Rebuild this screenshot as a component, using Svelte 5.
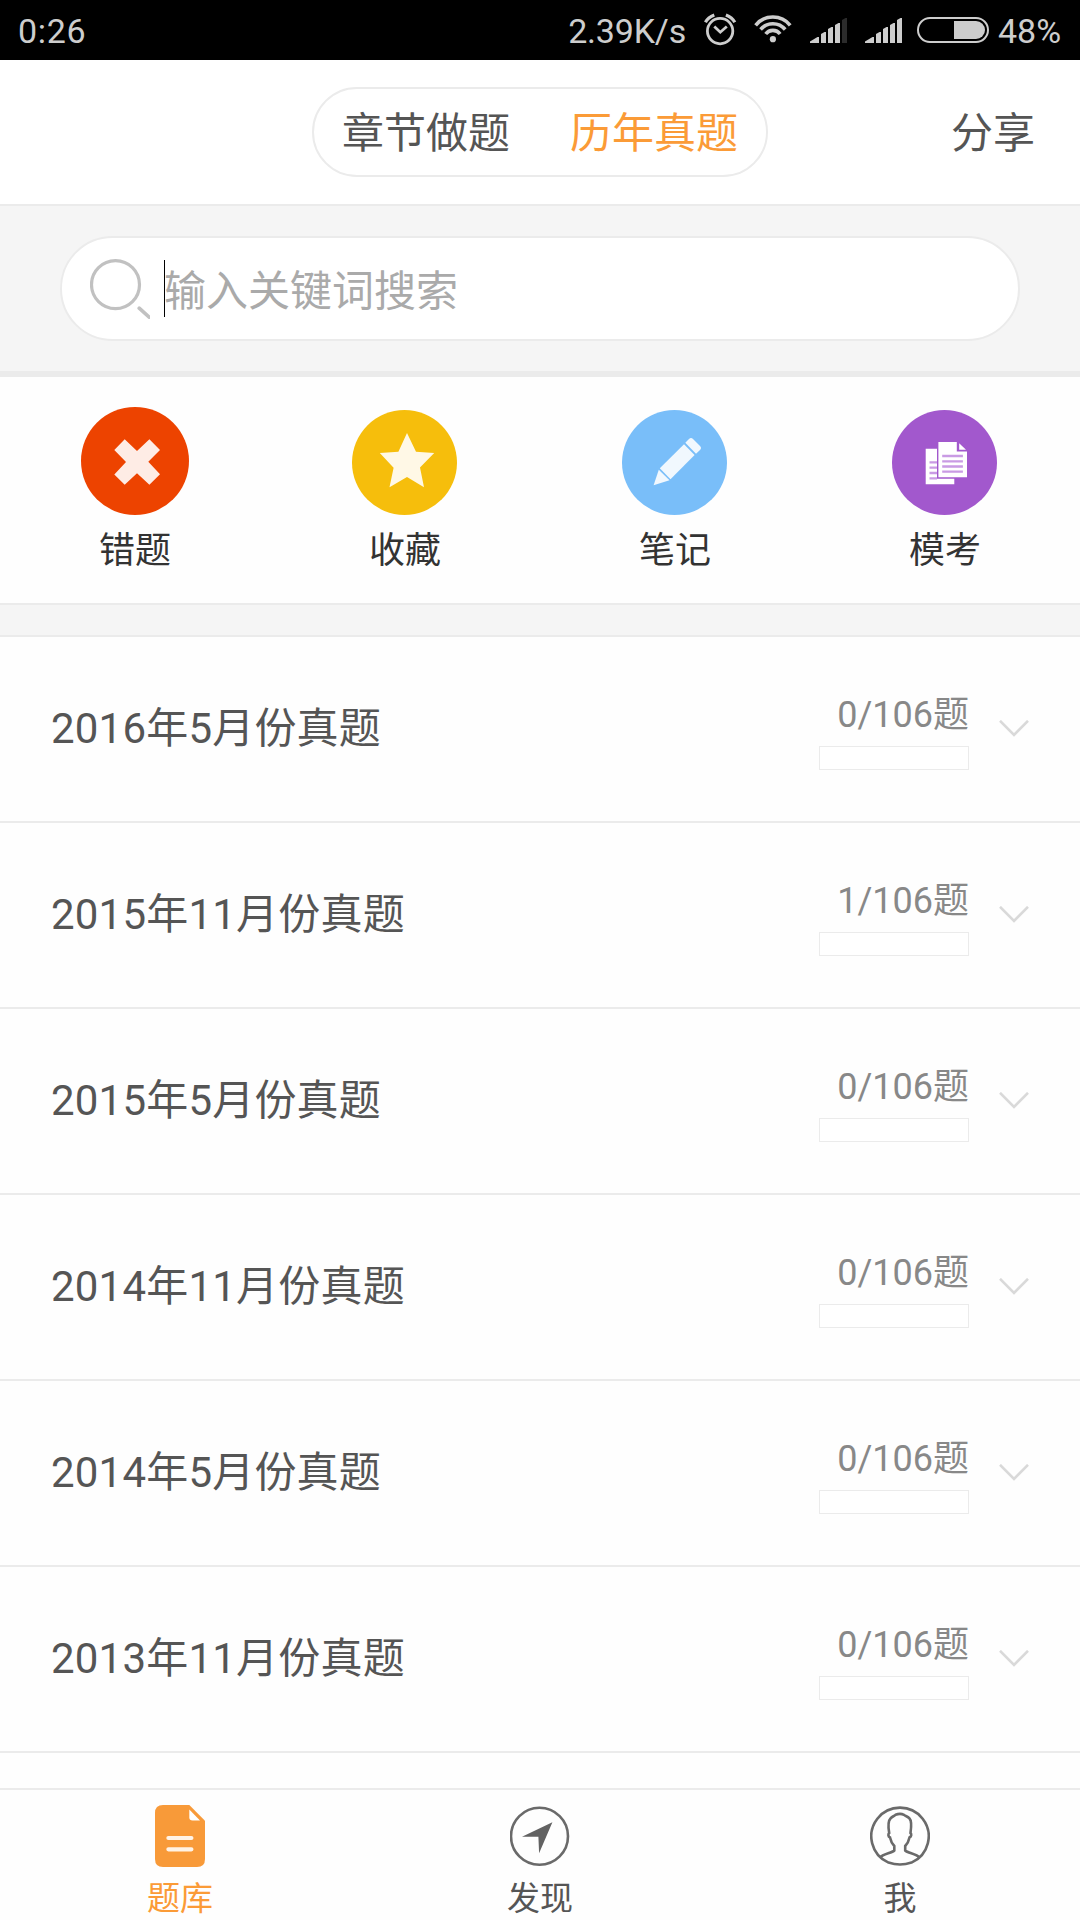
<script lang="ts">
  interface Paper {
    id: number
    title: string
    done: number
    total: number
  }

  const papers: Paper[] = [
    { id: 1, title: "2016年5月份真题", done: 0, total: 106 },
    { id: 2, title: "2015年11月份真题", done: 1, total: 106 },
    { id: 3, title: "2015年5月份真题", done: 0, total: 106 },
    { id: 4, title: "2014年11月份真题", done: 0, total: 106 },
    { id: 5, title: "2014年5月份真题", done: 0, total: 106 },
    { id: 6, title: "2013年11月份真题", done: 0, total: 106 },
  ]

  const modes = ["章节做题", "历年真题"]
  const shortcuts = [
    { icon: "wrong", label: "错题" },
    { icon: "star", label: "收藏" },
    { icon: "note", label: "笔记" },
    { icon: "mock", label: "模考" },
  ]
  const tabs = [
    { icon: "bank", label: "题库" },
    { icon: "find", label: "发现" },
    { icon: "me", label: "我" },
  ]

  let mode = $state("历年真题")
  let tab = $state("bank")
</script>

{#snippet signal(full: boolean)}
  <svg class="signal" width="37" height="25" viewBox="0 0 37 25" fill="#cdcdcd">
    <path d="M0 25v-1.500L7.500 19H9v6z" />
    <path d="M11 25V16L14.500 14H16V25z" />
    <path d="M18 25V11L21.500 9H23V25z" />
    <path d="M25 25V7L28.500 5H30V25z" />
    <path d="M32 25V2L35.500 0H37V25z" fill={full ? "#cdcdcd" : "#2b2b2b"} />
  </svg>
{/snippet}

<div class="screen" lang="zh-CN">
  <div class="status">
    <span class="clock">0:26</span>
    <span class="speed">2.39K/s</span>
    <svg class="alarm" width="33" height="33" viewBox="0 0 33 33" fill="none" stroke="#cdcdcd">
      <circle cx="16.1" cy="18.1" r="12.7" stroke-width="2.8" />
      <path d="M10.3 13.5l6 5.700 6.500-5.700" stroke-width="2.8" />
      <path d="M1.400 9.300Q4 4.500 10.300 2M30.800 9.300Q28.200 4.500 21.900 2" stroke-width="3.200" />
    </svg>
    <svg class="wifi" width="38" height="28" viewBox="0 0 38 28" fill="none" stroke="#cdcdcd" stroke-width="3.6">
      <path d="M1.6 10.3A22.3 22.3 0 0 1 36.2 10.3" />
      <path d="M6.6 14.500A15.9 15.9 0 0 1 31.2 14.500" />
      <path d="M11.7 19A9 9 0 0 1 26.1 19" />
      <circle cx="18.9" cy="24.2" r="3.1" fill="#cdcdcd" stroke="none" />
    </svg>
    {@render signal(false)}
    {@render signal(true)}
    <svg class="battery" width="72" height="26" viewBox="0 0 72 26">
      <rect x="1" y="1" width="70" height="24" rx="12" fill="none" stroke="#cdcdcd" stroke-width="2" />
      <path d="M37 4h22a9 9 0 0 1 0 18H37z" fill="#cdcdcd" />
    </svg>
    <span class="percent">48%</span>
  </div>

  <header class="topbar">
    <div class="switch">
      {#each modes as name}
        <button type="button" class:active={mode === name} onclick={() => (mode = name)}>{name}</button>
      {/each}
    </div>
    <button type="button" class="share">分享</button>
  </header>

  <div class="search">
    <div class="search-box">
      <svg width="60" height="60" viewBox="0 0 60 60" fill="none" stroke="#c1c1c1">
        <circle cx="25.5" cy="25.7" r="24" stroke-width="3.2" />
        <path d="M49.2 49.2l10 9" stroke-width="3.6" stroke-linecap="round" />
      </svg>
      <span class="caret"></span>
      <span class="placeholder">输入关键词搜索</span>
    </div>
  </div>

  <nav class="shortcuts">
    {#each shortcuts as item (item.icon)}
      <a class="shortcut" href="#{item.icon}">
        {#if item.icon === "wrong"}
          <svg width="108" height="108" viewBox="0 0 108 108">
            <circle cx="54" cy="54" r="54" fill="#ed4300" />
            <path d="M43.7 32.3L56 44l12.4-11.7L79 43 67.3 54.7 79 67.3 68.4 77.7 56 66.3 43.7 77.7 33.3 67.5 45 55 33.3 43z" fill="#feece5" />
          </svg>
        {:else if item.icon === "star"}
          <svg width="106" height="105" viewBox="0 0 106 105">
            <circle cx="52.5" cy="52.5" r="52.5" fill="#f6be0c" />
            <path d="M55 23l9 18.7 18.2 1.3L68 57.5l4 19.8L55 67 37.5 77.3l4.1-19.5L27.8 43l18.6-1.3z" fill="#fff8e6" />
          </svg>
        {:else if item.icon === "note"}
          <svg width="106" height="105" viewBox="0 0 106 105">
            <circle cx="52.5" cy="52.5" r="52.5" fill="#79bef9" />
            <g fill="#f1f8fe">
              <path d="M31.6 75.3l5.2-15.6 10.7 10.6z" />
              <path d="M37.8 58.2L62 34.3l10.6 10.8-24.1 24.2z" />
              <path d="M63.3 32.8l3.7-3.7q2-2 4 0l7 7q2 2 0 4L74 43.8z" />
            </g>
          </svg>
        {:else}
          <svg width="106" height="105" viewBox="0 0 106 105">
            <circle cx="52.5" cy="52.5" r="52.5" fill="#a258cd" />
            <path d="M33.7 38.7H45v30.1h17.3v5.5H33.7z" fill="#fff" />
            <path d="M46.4 32h18.4v9.6H75v25.7H46.4z" fill="#fff" />
            <path d="M67.2 33.3l6.8 6.5h-6.8z" fill="#fff" />
            <path d="M50.2 46h20.7M50.2 51.3h20.7M50.2 56.5h20.7M50.2 61.7h20.7M37.5 52.3H45M37.5 57.7H45M37.5 63H45M37.5 68.3H45" stroke="#c99be4" stroke-width="2.3" />
          </svg>
        {/if}
        <span>{item.label}</span>
      </a>
    {/each}
  </nav>

  <ul class="papers">
    {#each papers as paper (paper.id)}
      <li class="paper">
        <span class="title">{paper.title}</span>
        <div class="progress">
          <span class="count">{paper.done}/{paper.total}题</span>
          <span class="bar"></span>
        </div>
        <svg class="chevron" width="30" height="18" viewBox="0 0 30 18" fill="none" stroke="#d9d9d9" stroke-width="2.6">
          <path d="M1 .8l14 14.200 14-14.200" />
        </svg>
      </li>
    {/each}
  </ul>

  <nav class="tabbar">
    {#each tabs as item (item.icon)}
      <button type="button" class="tab" class:active={tab === item.icon} onclick={() => (tab = item.icon)}>
        {#if item.icon === "bank"}
          <svg width="50" height="62" viewBox="0 0 50 62">
            <path d="M8 0h26.3L50 15.7V54q0 8-8 8H8q-8 0-8-8V8q0-8 8-8z" fill="#f89a39" />
            <path d="M34.3 4.5v7.7q0 3.3 3.3 3.3H45z" fill="#fff" />
            <path d="M13.4 33h23M13.4 44.3h23" stroke="#fff3e6" stroke-width="4.2" stroke-linecap="round" />
          </svg>
        {:else if item.icon === "find"}
          <svg width="60" height="62" viewBox="0 -1 60 62">
            <circle cx="29.5" cy="30.2" r="28.5" fill="none" stroke="#6a6a6a" stroke-width="2.6" />
            <path d="M42.4 16.3L12 30.7h16.4l.7 16.6z" fill="#626262" />
          </svg>
        {:else}
          <svg width="60" height="62" viewBox="0 -1 60 62" fill="none" stroke="#6a6a6a" stroke-width="2.6">
            <path d="M18.500 56.600A28.700 28.700 0 1 1 41.500 56.600Q30 60.500 18.500 56.600z" />
            <path d="M10 51.5C13 48 22 47 24.3 44.5V40C21.5 37 20.5 34 20 31.5C18 30.5 18 28 19.2 27C18 20 18 15 20.5 12.5C22 10.5 24 10.3 25.5 8.8C28 7.8 32 7.8 34 8.8C35.5 10.3 38 10.5 39.500 12.5C42 15 41.500 20 40.500 27C41.700 28 41.500 30.5 39.500 31.5C39 34 38 37 35.2 40V44.5C37.500 47 46.500 48 49.500 51.5" />
          </svg>
        {/if}
        <span>{item.label}</span>
      </button>
    {/each}
  </nav>
</div>

<style>
  :global(body) {
    margin: 0;
    background: #fff;
  }

  .screen {
    display: flex;
    flex-direction: column;
    width: 1080px;
    height: 1920px;
    overflow: hidden;
    background: #fefefe;
    color: #555;
    font-family: Roboto, "Noto Sans CJK SC", sans-serif;
    font-size: 42px;
  }

  svg {
    display: block;
    flex-shrink: 0;
  }

  button {
    padding: 0;
    border: 0;
    background: none;
    color: inherit;
    font: inherit;
  }

  .status {
    display: flex;
    align-items: flex-start;
    flex-shrink: 0;
    box-sizing: border-box;
    height: 60px;
    padding: 0 17px 0 18px;
    background: #000;
    color: #cdcdcd;
    font-size: 34px;
    line-height: 62px;
  }

  .clock {
    letter-spacing: 0.7px;
  }

  .speed {
    margin-left: auto;
    letter-spacing: -0.2px;
  }

  .alarm {
    margin: 13px 0 0 18px;
  }

  .wifi {
    margin: 15px 0 0 17px;
  }

  .signal {
    margin: 18px 0 0 18px;
  }

  .battery {
    margin: 17px 0 0 15px;
  }

  .percent {
    width: 65px;
    margin-left: 9px;
  }

  .topbar {
    display: grid;
    grid-template-columns: 1fr auto 1fr;
    align-items: center;
    flex-shrink: 0;
    height: 144px;
    border-bottom: 2px solid #ebebeb;
    background: #fff;
  }

  .topbar button {
    padding-bottom: 5px;
  }

  .switch {
    grid-column: 2;
    display: flex;
    justify-content: space-between;
    box-sizing: border-box;
    width: 456px;
    height: 90px;
    padding: 0 28px;
    border: 2px solid #ebebeb;
    border-radius: 45px;
  }

  .switch .active {
    color: #fb9b37;
  }

  .share {
    justify-self: end;
    margin-right: 45px;
  }

  .search {
    flex-shrink: 0;
    padding: 30px 60px;
    border-bottom: 6px solid #ebebeb;
    background: #f5f5f5;
  }

  .search-box {
    display: flex;
    align-items: center;
    box-sizing: border-box;
    height: 105px;
    padding-left: 28px;
    border: 2px solid #ebebeb;
    border-radius: 53px;
    background: #fff;
    color: #aaa;
  }

  .caret {
    width: 1px;
    height: 57px;
    margin-left: 14px;
    background: #000;
  }

  .placeholder {
    margin-left: -1px;
    padding-bottom: 3px;
  }

  .shortcuts {
    display: grid;
    grid-template-columns: repeat(4, 1fr);
    flex-shrink: 0;
    height: 226px;
    border-bottom: 2px solid #ebebeb;
  }

  .shortcut {
    display: flex;
    flex-direction: column;
    align-items: center;
    justify-content: flex-end;
    gap: 12px;
    padding-bottom: 28px;
    color: #333;
    font-size: 36px;
    line-height: 48px;
    text-decoration: none;
  }

  .papers {
    flex: 1;
    min-height: 0;
    overflow: hidden;
    margin: 0;
    padding: 0;
    border-top: 30px solid #f5f5f5;
    list-style: none;
  }

  .paper {
    display: flex;
    align-items: center;
    box-sizing: border-box;
    height: 186px;
    padding: 0 51px;
    border-bottom: 2px solid #ebebeb;
  }

  .paper:first-child {
    height: 188px;
    border-top: 2px solid #ebebeb;
  }

  .title {
    padding-bottom: 9px;
    letter-spacing: 0.2px;
  }

  .progress {
    display: flex;
    flex-direction: column;
    align-items: flex-end;
    gap: 6px;
    margin-left: auto;
    padding-top: 2px;
  }

  .count {
    color: #888;
    font-size: 36px;
    line-height: 50px;
  }

  .bar {
    box-sizing: border-box;
    width: 150px;
    height: 24px;
    border: 1px solid #ebebeb;
    background: #fff;
  }

  .chevron {
    margin-left: 30px;
  }

  .tabbar {
    display: grid;
    grid-template-columns: repeat(3, 1fr);
    flex-shrink: 0;
    height: 130px;
    border-top: 2px solid #ebebeb;
  }

  .tab {
    display: flex;
    flex-direction: column;
    align-items: center;
    gap: 10px;
    padding-top: 15px;
    font-size: 33px;
    line-height: 44px;
  }

  .tab.active {
    color: #fb9b37;
  }
</style>
